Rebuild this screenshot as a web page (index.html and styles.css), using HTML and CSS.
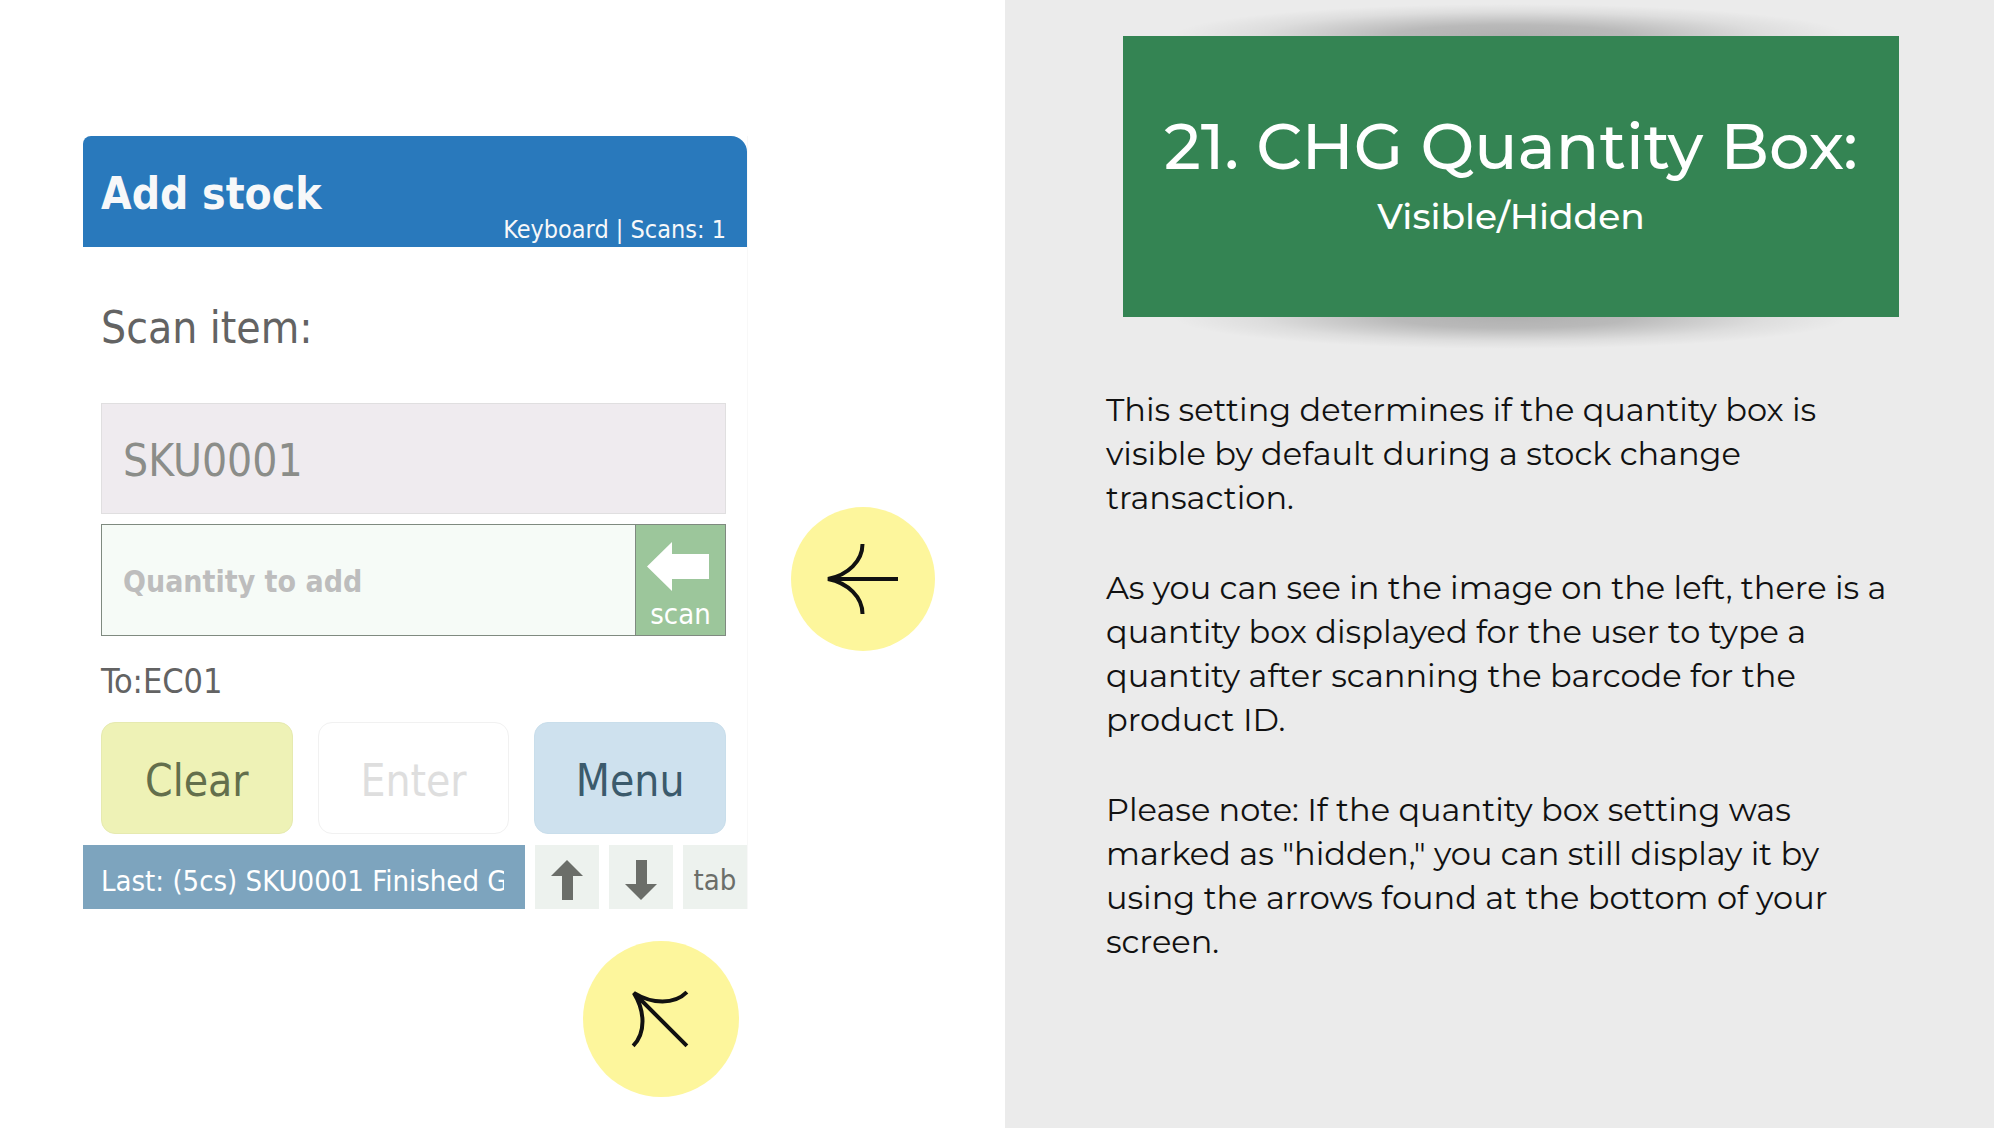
FILE: index.html
```html
<!DOCTYPE html>
<html lang="en">
<head>
    <meta charset="UTF-8">
    <meta name="viewport" content="width=device-width, initial-scale=1.0">
    <title>CHG Quantity Box</title>
    <link rel="stylesheet" href="styles.css">
</head>
<body>
    <div class="slide">
        <section class="demo">
            <div class="demo-row">
                <div class="scanner">
                    <header class="scanner-header">
                        <h2>Add stock</h2>
                        <p>Keyboard | Scans: 1</p>
                    </header>
                    <div class="scanner-body">
                        <label class="prompt" for="item">Scan item:</label>
                        <input class="item-box" type="text" id="item" value="SKU0001">
                        <div class="quantity-row">
                            <input class="quantity-box" type="text" id="quantity" placeholder="Quantity to add" aria-label="Quantity to add">
                            <button class="scan-button">
                                <svg width="62" height="49" viewBox="0 0 62 49"><path d="M0 24.500 25 0V12H62V37H25V49Z" fill="#fff"/></svg>
                                <span>scan</span>
                            </button>
                        </div>
                        <p class="location">To:EC01</p>
                        <div class="actions">
                            <button class="clear">Clear</button>
                            <button class="enter" disabled>Enter</button>
                            <button class="menu">Menu</button>
                        </div>
                    </div>
                    <footer class="scanner-footer">
                        <div class="last"><p>Last: (5cs) SKU0001 Finished G</p></div>
                        <button class="key" aria-label="Up">
                            <svg width="32" height="40" viewBox="0 0 32 40"><path d="M16 0 32 16H22V40H11V16H0Z" fill="#6b6e69"/></svg>
                        </button>
                        <button class="key" aria-label="Down">
                            <svg width="32" height="40" viewBox="0 0 32 40"><path d="M16 40 32 24H22V0H11V24H0Z" fill="#6b6e69"/></svg>
                        </button>
                        <button class="key">tab</button>
                    </footer>
                </div>
                <!-- points at the quantity box -->
                <svg class="pointer pointer-left" viewBox="0 0 144 144">
                    <circle cx="72" cy="72" r="72" fill="#fdf69c"/>
                    <path d="M107 72H39M71.500 37C71.500 54 57 68 37 72C57 76 71.500 90 71.500 107" fill="none" stroke="#111" stroke-width="4"/>
                </svg>
            </div>
            <!-- points at the arrow keys -->
            <svg class="pointer pointer-up" viewBox="0 0 156 156">
                <circle cx="78" cy="78" r="78" fill="#fdf69c"/>
                <g transform="translate(77 78) rotate(45) translate(-78 -78)">
                    <path d="M116 78H43M78 40C78 58 62 73 41 78C62 83 78 98 78 116" fill="none" stroke="#111" stroke-width="4"/>
                </g>
            </svg>
        </section>

        <section class="info">
            <div class="title-card">
                <h1>21. CHG Quantity Box:</h1>
                <p>Visible/Hidden</p>
            </div>
            <div class="description">
                <p>This setting determines if the quantity box is<br>visible by default during a stock change<br>transaction.</p>
                <p>As you can see in the image on the left, there is a<br>quantity box displayed for the user to type a<br>quantity after scanning the barcode for the<br>product ID.</p>
                <p>Please note: If the quantity box setting was<br>marked as "hidden," you can still display it by<br>using the arrows found at the bottom of your<br>screen.</p>
            </div>
        </section>
    </div>
</body>
</html>
```
FILE: styles.css
```css
* {
    box-sizing: border-box;
}

body {
    margin: 0;
    background-color: #fff;
}

h1, h2, p {
    margin: 0;
    font-weight: normal;
}

button, input {
    margin: 0;
    font-family: inherit;
}

.slide {
    display: flex;
    min-height: 100vh;
}

/* left side */
.demo {
    flex: 0 0 50.4%;
    padding: 136px 0 0 83px;
    font-family: "DejaVu Sans Condensed", "Noto Sans", sans-serif;
}

.demo-row {
    display: flex;
    gap: 43px;
}

.scanner {
    width: 665px;
    border-right: 1px solid #f8f8f8;
}

.scanner-header {
    display: flex;
    justify-content: space-between;
    height: 111px;
    padding: 0 21px 0 18px;
    border-radius: 8px 16px 0 0;
    background-color: #2979bc;
    color: #f7f8f9;
}

.scanner-header h2 {
    font-size: 44px;
    font-weight: bold;
    line-height: 116px;
}

.scanner-header p {
    align-self: flex-end;
    font-size: 25px;
    line-height: 34px;
}

.scanner-body {
    padding: 0 21px 0 18px;
}

.prompt {
    display: block;
    padding-top: 6px;
    color: #636363;
    font-size: 44px;
    line-height: 150px;
}

.item-box {
    display: block;
    width: 100%;
    height: 111px;
    padding: 4px 21px 0;
    border: 1px solid #e0dfe0;
    background-color: #efebef;
    color: #8b8d89;
    font-size: 44px;
}

.quantity-row {
    display: flex;
    height: 112px;
    margin-top: 10px;
    border: 1px solid #7f8a80;
}

.quantity-box {
    flex: 1;
    min-width: 0;
    padding: 2px 21px 0;
    border: none;
    background-color: #f6fbf7;
    font-size: 30px;
}

.quantity-box::placeholder {
    color: #bdbdbd;
    font-weight: bold;
}

.scan-button {
    display: flex;
    flex-direction: column;
    align-items: center;
    justify-content: space-between;
    width: 90px;
    padding: 17px 6px 4px 0;
    border: none;
    border-left: 1px solid #7f8a80;
    background-color: #9cc69b;
    color: #fff;
    font-size: 29px;
    line-height: 34px;
}

.scan-button span {
    padding-left: 6px;
}

.location {
    padding-top: 4px;
    color: #636363;
    font-size: 34px;
    line-height: 82px;
}

.actions {
    display: flex;
    gap: 25px;
}

.actions button {
    flex: 1;
    height: 112px;
    padding: 4px 0 0;
    border: 1px solid #f1f1f1;
    border-radius: 14px;
    font-size: 44px;
}

.actions .clear {
    border-color: #e6eab0;
    background-color: #eef2b6;
    color: #636f4c;
}

.actions .enter {
    background-color: #fff;
    color: #dedede;
}

.actions .menu {
    border-color: #c9deeb;
    background-color: #cee1ee;
    color: #3b5a6c;
}

.scanner-footer {
    display: flex;
    gap: 10px;
    height: 64px;
    margin-top: 11px;
}

.last {
    flex: 1;
    min-width: 0;
    padding: 0 21px 0 18px;
    background-color: #7da4be;
    color: #fff;
    font-size: 29px;
    line-height: 72px;
}

.last p {
    overflow: hidden;
    height: 64px;
    white-space: nowrap;
}

.key {
    display: flex;
    align-items: center;
    justify-content: center;
    width: 64px;
    padding: 6px 0 0;
    border: none;
    background-color: #edf2ee;
    color: #6b6e69;
    font-size: 29px;
}

/* yellow markers */
.pointer {
    display: block;
}

.pointer-left {
    width: 144px;
    height: 144px;
    margin-top: 371px;
}

.pointer-up {
    width: 156px;
    height: 156px;
    margin: 32px 0 0 500px;
}

/* right side */
.info {
    position: relative;
    z-index: 0;
    flex: 1;
    min-width: 0;
    padding: 36px 95px 0 118px;
    background-color: #ebebeb;
    font-family: Montserrat, Inter, sans-serif;
}

.title-card {
    position: relative;
    height: 281px;
    padding-top: 70px;
    background-color: #348453;
    color: #fff;
    text-align: center;
}

/* curved shadow above and below the card */
.title-card::before,
.title-card::after {
    content: "";
    position: absolute;
    z-index: -1;
    right: 50px;
    left: 50px;
    height: 64px;
    background: radial-gradient(closest-side, rgba(0, 0, 0, 0.25), rgba(0, 0, 0, 0.21) 35%, rgba(0, 0, 0, 0.06) 75%, rgba(0, 0, 0, 0));
}

.title-card::before {
    top: -32px;
}

.title-card::after {
    bottom: -32px;
}

.title-card h1 {
    font-size: 64px;
    font-weight: 500;
    line-height: 80px;
}

.title-card p {
    font-size: 36px;
    font-weight: 500;
    line-height: 60px;
}

.description {
    margin: 71px -15px 0 -17px;
    color: #111;
    font-size: 32px;
    line-height: 44px;
}

.description p {
    margin-bottom: 46px;
    white-space: nowrap;
}
```
